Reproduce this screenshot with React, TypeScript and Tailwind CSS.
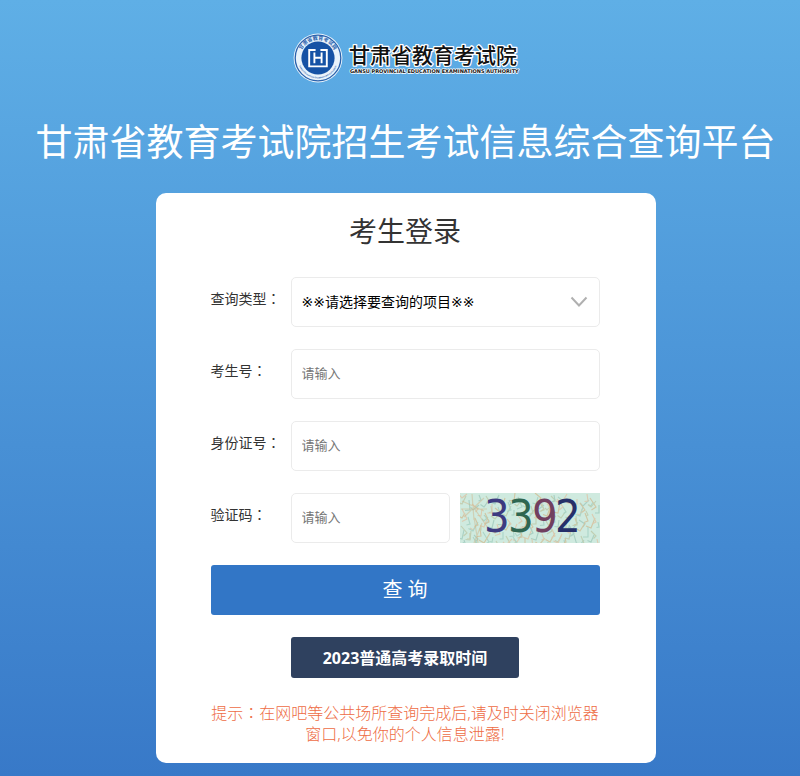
import { useState } from 'react';
import type { ReactNode } from 'react';

const fieldClass =
  'h-[50px] w-full rounded-[5px] border border-[#ebebeb] bg-white pb-[2px] pl-[10px] text-[13px] text-black outline-none placeholder:text-[#757575] focus:border-[#3276c6]';

// the full-width colon sits centred in its cell only in the TC face
function Colon() {
  return <span className="font-['Noto_Sans_CJK_TC',sans-serif]">：</span>;
}

function Field({ id, label, children }: { id: string; label: string; children: ReactNode }) {
  return (
    <div className="flex items-start">
      <label htmlFor={id} className="w-20 shrink-0 text-sm leading-[42px] text-[#333]">
        {label}
        <Colon />
      </label>
      <div className="flex min-w-0 flex-1 gap-[10px]">{children}</div>
    </div>
  );
}

function Emblem() {
  return (
    <svg viewBox="0 0 50 50" className="size-[50px] shrink-0 overflow-visible" aria-hidden="true">
      <defs>
        <path id="ring-top" d="M7 25a18 18 0 0 1 36 0" />
        <path id="ring-bottom" d="M4.6 25a20.4 20.4 0 0 0 40.8 0" />
      </defs>
      <circle cx="25" cy="25" r="24.4" fill="#e9f3fb" />
      <circle cx="25" cy="25" r="22.8" fill="none" stroke="#2a62ad" strokeWidth="1.3" />
      <circle cx="25" cy="25" r="16.6" fill="#1552a5" />
      <g fill="#2a62ad" textAnchor="middle">
        <text fontSize="5" fontWeight="700" fontFamily="Noto Sans CJK SC, sans-serif">
          <textPath href="#ring-top" startOffset="50%">甘肃省教育考试院</textPath>
        </text>
        <text fontSize="2" fontWeight="700" fontFamily="Liberation Sans, sans-serif">
          <textPath href="#ring-bottom" startOffset="50%">GANSU EDUCATION EXAMINATIONS AUTHORITY</textPath>
        </text>
      </g>
      <g fill="none" stroke="#fff" strokeWidth="1.9">
        <path d="M22.6 17h-6.4v16.4h17.6V17h-6.4" />
        <path d="M21.4 19.6v10.6M28.6 19.6v10.6M21.4 24.8h7.2" />
      </g>
    </svg>
  );
}

function Brand() {
  return (
    <div className="flex items-center gap-[7px]">
      <Emblem />
      <svg viewBox="0 0 168 42" className="h-[42px] w-[168px] overflow-visible" role="img" aria-label="甘肃省教育考试院">
        <g stroke="#fff" strokeLinejoin="round" paintOrder="stroke" fill="#111">
          <text x="-1" y="26" fontSize="21" fontWeight="500" strokeWidth="2.5" fontFamily="Noto Sans CJK SC, sans-serif">
            甘肃省教育考试院
          </text>
          <text x="0" y="36" fontSize="5" fontWeight="700" strokeWidth="1.5" fontFamily="DejaVu Sans, sans-serif">
            GANSU PROVINCIAL EDUCATION EXAMINATIONS AUTHORITY
          </text>
        </g>
      </svg>
    </div>
  );
}

const specks = Array.from({ length: 150 }, (_, i) => {
  const x = (i * 53) % 140;
  const y = (i * 29 + (i % 7) * 5) % 50;
  const dx = ((i * 7) % 13) - 6;
  const dy = 4 + ((i * 5) % 7);
  const color = ['#d2bd94', '#a3d0c2', '#bdc9a8', '#a0cabd', '#dfc4a6'][i % 5];
  return { d: `M${x} ${y}l${dx} ${dy}l${-dy / 2} ${dx / 2}`, color };
});

function Captcha() {
  return (
    <svg viewBox="0 0 140 50" className="h-[50px] w-[140px]" role="img" aria-label="验证码">
      <rect width="140" height="50" fill="#cfeadf" />
      <g fill="none" strokeWidth="1.1" opacity="0.8">
        {specks.map((s, i) => (
          <path key={i} d={s.d} stroke={s.color} />
        ))}
      </g>
      <path
        d="M2 8l22 10M12 1l2 26M24 5L4 24M1 16h26M14 15l14 20M14 24l4 26M22 30l-8 20"
        stroke="#d0b88c"
        strokeWidth="1.2"
        opacity="0.5"
      />
      <text x="24 48 72 95" y="39" fontSize="45" fontFamily="DejaVu Sans Condensed, DejaVu Sans, sans-serif">
        <tspan fill="#3d3a80">3</tspan>
        <tspan fill="#2f6650">3</tspan>
        <tspan fill="#71405f">9</tspan>
        <tspan fill="#263069">2</tspan>
      </text>
    </svg>
  );
}

export default function App() {
  const [type, setType] = useState('');

  return (
    <div className="flex min-h-screen flex-col items-center bg-linear-to-b from-[#5fafe6] to-[#3879c8] pt-[33px] pb-[13px] pl-[11px] font-['Open_Sans','Noto_Sans_CJK_SC',sans-serif]">
      <Brand />
      <h1 className="mt-[34px] text-center text-[37px] leading-[50px] text-white">
        甘肃省教育考试院招生考试信息综合查询平台
      </h1>

      <main className="mt-[26px] w-full max-w-[500px] rounded-[10px] bg-white pt-[18px] pr-14 pb-[18px] pl-[55px]">
        <h2 className="text-center text-[28px] leading-[40px] text-[#333]">考生登录</h2>

        <form className="mt-[26px] flex flex-col gap-[22px]" onSubmit={(e) => e.preventDefault()}>
          <Field id="type" label="查询类型">
            <div className="relative w-full">
              <select
                id="type"
                value={type}
                onChange={(e) => setType(e.target.value)}
                className="h-[50px] w-full appearance-none rounded-[5px] border border-[#ebebeb] bg-white pl-[10px] font-['DejaVu_Sans','Noto_Sans_CJK_SC',sans-serif] text-sm text-black outline-none"
              >
                <option value="">※※请选择要查询的项目※※</option>
              </select>
              <svg viewBox="0 0 18 12" className="pointer-events-none absolute top-[19px] right-3 h-3 w-[18px]" aria-hidden="true">
                <path d="M1.5 1.5L9 9.5l7.5-8" fill="none" stroke="#b0b0b0" strokeWidth="2" />
              </svg>
            </div>
          </Field>
          <Field id="examNo" label="考生号">
            <input id="examNo" type="text" placeholder="请输入" className={fieldClass} />
          </Field>
          <Field id="idCard" label="身份证号">
            <input id="idCard" type="text" placeholder="请输入" className={fieldClass} />
          </Field>
          <Field id="captcha" label="验证码">
            <div className="min-w-0 flex-1">
              <input id="captcha" type="text" placeholder="请输入" className={fieldClass} />
            </div>
            <Captcha />
          </Field>

          <button type="submit" className="h-[50px] rounded-[3px] bg-[#3276c6] text-xl text-white">
            查 询
          </button>
          <button type="button" className="h-[41px] self-center rounded-[3px] bg-[#2f415f] px-8 text-base font-bold text-white">
            2023普通高考录取时间
          </button>
        </form>

        <p className="mt-6 text-center text-base leading-[21px] font-light text-[#ee6c44]">
          提示
          <Colon />
          在网吧等公共场所查询完成后,请及时关闭浏览器窗口,以免你的个人信息泄露!
        </p>
      </main>
    </div>
  );
}
